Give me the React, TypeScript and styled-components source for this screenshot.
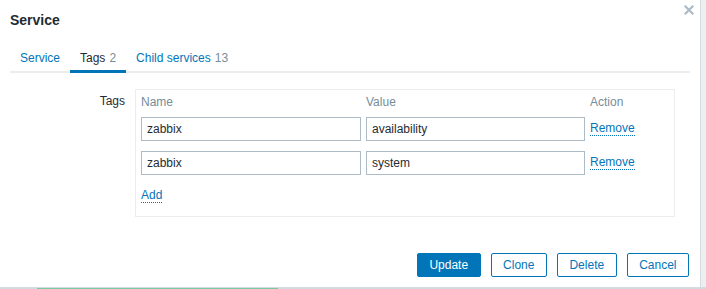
import { FC } from 'react';
import styled, { createGlobalStyle } from 'styled-components';

const COLOURS = {
  text: '#1f2c33',
  grey: '#768d99',
  link: '#0275b8',
  inputBorder: '#acbbc6',
  line: '#ebeef0',
  page: '#eceff1',
};

interface ITab {
  isActive?: boolean;
}
interface IButton {
  isPrimary?: boolean;
}

const GlobalStyle = createGlobalStyle`
  html, body {
    margin: 0;
    padding: 0;
    background: ${COLOURS.page};
  }
  body {
    font-family: "Liberation Sans", Arial, sans-serif;
    font-size: 12px;
    color: ${COLOURS.text};
  }
`;

const SPage = styled.div`
  width: 706px;
  height: 289px;
  display: flex;
  flex-direction: column;
  overflow: hidden;
  background: ${COLOURS.page};
`;
const SDialog = styled.div`
  position: relative;
  width: 700px;
  height: 287px;
  flex-shrink: 0;
  box-sizing: border-box;
  background: #fff;
  box-shadow: 1px 0 0 #d5dbdf, 0 1px 0 #d5dbdf;
  display: flex;
  flex-direction: column;
  padding: 0 10px 10px;
`;
const SHeader = styled.div`
  height: 42px;
  box-sizing: border-box;
  padding-top: 12px;
`;
const STitle = styled.h4`
  margin: 0;
  font-size: 14px;
  line-height: 16px;
  font-weight: bold;
  color: ${COLOURS.text};
`;
const SClose = styled.button`
  position: absolute;
  top: 5px;
  left: 684px;
  width: 10px;
  height: 10px;
  padding: 0;
  border: none;
  background: transparent;
  line-height: 0;
  cursor: pointer;
`;
const STabs = styled.ul`
  display: flex;
  margin: 0;
  padding: 0;
  list-style: none;
  border-bottom: 2px solid ${COLOURS.line};
`;
const STab = styled.li<ITab>`
  padding: 9px 10px 5px;
  margin-bottom: -2px;
  line-height: 14px;
  border-bottom: 3px solid
    ${({ isActive }) => (isActive ? COLOURS.link : 'transparent')};
  color: ${({ isActive }) => (isActive ? COLOURS.text : COLOURS.link)};
  cursor: pointer;
  white-space: nowrap;
`;
const SCount = styled.span`
  color: ${COLOURS.grey};
  margin-left: 4px;
`;
const SForm = styled.div`
  display: grid;
  grid-template-columns: 115px 540px;
  column-gap: 10px;
  padding-top: 16px;
`;
const SLabel = styled.label`
  text-align: right;
  padding-top: 5px;
  line-height: 14px;
`;
const STagsBox = styled.div`
  border: 1px solid ${COLOURS.line};
  padding: 5px 5px 13px;
  display: grid;
  grid-template-columns: 220px 219px 1fr;
  column-gap: 5px;
  row-gap: 10px;
`;
const SHeadCell = styled.div`
  color: ${COLOURS.grey};
  line-height: 14px;
  margin-bottom: -2px;
`;
const SInput = styled.input`
  width: 100%;
  height: 24px;
  box-sizing: border-box;
  margin: 0;
  padding: 0 5px;
  border: 1px solid ${COLOURS.inputBorder};
  border-radius: 0;
  font-family: "Liberation Sans", Arial, sans-serif;
  font-size: 12px;
  color: ${COLOURS.text};
  background: #fff;
  outline: none;
`;
const SLink = styled.button`
  justify-self: start;
  align-self: start;
  margin-top: 4px;
  padding: 0;
  border: none;
  border-bottom: 1px dotted ${COLOURS.link};
  background: transparent;
  font-family: "Liberation Sans", Arial, sans-serif;
  font-size: 12px;
  line-height: 14px;
  color: ${COLOURS.link};
  cursor: pointer;
`;
const SAddLink = styled(SLink)`
  grid-column: 1 / 2;
  margin-top: 3px;
`;
const SFooter = styled.div`
  margin-top: auto;
  display: flex;
  justify-content: flex-end;
  gap: 10px;
  padding-right: 1px;
`;
const SButton = styled.button<IButton>`
  height: 24px;
  padding: 0 11.5px;
  border: 1px solid ${COLOURS.link};
  border-radius: 2px;
  font-family: "Liberation Sans", Arial, sans-serif;
  font-size: 12px;
  line-height: 22px;
  cursor: pointer;
  background: ${({ isPrimary }) => (isPrimary ? COLOURS.link : '#fff')};
  color: ${({ isPrimary }) => (isPrimary ? '#fff' : COLOURS.link)};
`;
const SUnderStrip = styled.div`
  height: 2px;
  flex-shrink: 0;
  background: #d3d9dc;
`;
const SGreenBar = styled.div`
  margin-left: 37px;
  width: 241px;
  height: 2px;
  background: #79c9a2;
`;

const TAGS = [
  { name: 'zabbix', value: 'availability' },
  { name: 'zabbix', value: 'system' },
];

const CloseIcon: FC = () => (
  <svg width="10" height="10" viewBox="0 0 10 10">
    <path
      d="M1.5 1.5 L8.5 8.5 M8.5 1.5 L1.5 8.5"
      stroke="#acbbc6"
      strokeWidth="2.2"
      strokeLinecap="square"
    />
  </svg>
);

const App: FC = () => {
  return (
    <SPage>
      <GlobalStyle />
      <SDialog>
        <SHeader>
          <STitle>Service</STitle>
        </SHeader>
        <SClose title="Close">
          <CloseIcon />
        </SClose>
        <STabs>
          <STab>Service</STab>
          <STab isActive>
            Tags<SCount>2</SCount>
          </STab>
          <STab>
            Child services<SCount>13</SCount>
          </STab>
        </STabs>
        <SForm>
          <SLabel>Tags</SLabel>
          <STagsBox>
            <SHeadCell>Name</SHeadCell>
            <SHeadCell>Value</SHeadCell>
            <SHeadCell>Action</SHeadCell>
            {TAGS.map((tag, i) => [
              <SInput key={`n${i}`} defaultValue={tag.name} />,
              <SInput key={`v${i}`} defaultValue={tag.value} />,
              <SLink key={`r${i}`}>Remove</SLink>,
            ])}
            <SAddLink>Add</SAddLink>
          </STagsBox>
        </SForm>
        <SFooter>
          <SButton isPrimary>Update</SButton>
          <SButton>Clone</SButton>
          <SButton>Delete</SButton>
          <SButton>Cancel</SButton>
        </SFooter>
      </SDialog>
      <SUnderStrip>
        <SGreenBar />
      </SUnderStrip>
    </SPage>
  );
};

export default App;
